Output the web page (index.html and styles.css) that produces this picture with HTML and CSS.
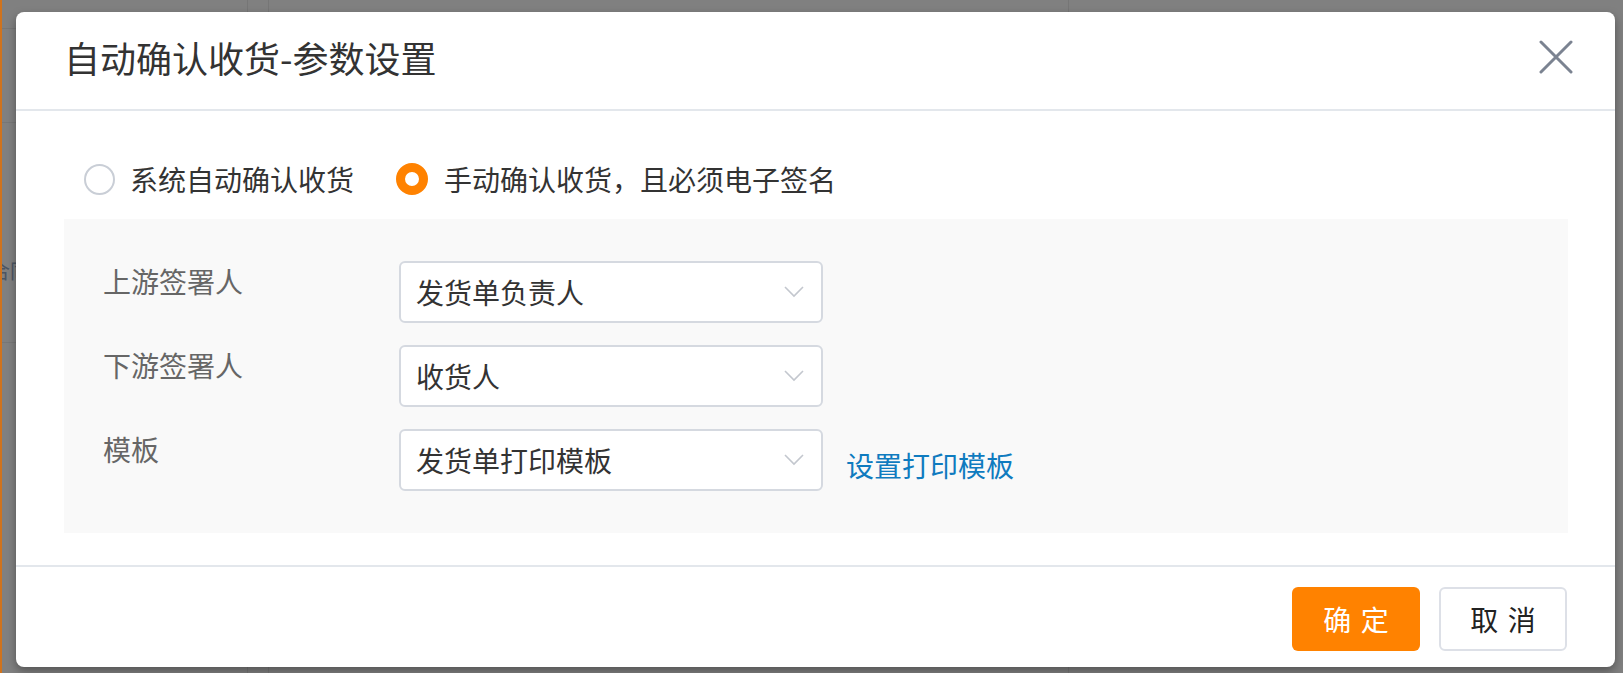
FILE: index.html
```html
<!DOCTYPE html>
<html lang="zh-CN">
<head>
<meta charset="utf-8">
<title>自动确认收货-参数设置</title>
<link rel="stylesheet" href="styles.css">
</head>
<body>
<div class="page">
  <div class="page-strip"></div>
  <div class="page-col col-a">
    <div class="page-row r1"></div>
    <div class="page-row r2"></div>
    <div class="page-row r3"><span class="ghost-text">合同</span></div>
  </div>
  <div class="page-col col-b"></div>
  <div class="page-col col-c"></div>
  <div class="page-col col-b"></div>
  <div class="page-col col-d"></div>
</div>

<div class="modal">
  <div class="modal-header">
    <h1 class="modal-title">自动确认收货-参数设置</h1>
    <button class="modal-close" aria-label="关闭">
      <svg width="34" height="34" viewBox="0 0 34 34"><path d="M2 2 L32 32 M32 2 L2 32" stroke="#7b8391" stroke-width="3" stroke-linecap="round" fill="none"/></svg>
    </button>
  </div>

  <div class="modal-body">
    <div class="radio-row">
      <label class="radio"><span class="radio-dot"></span><span class="radio-text">系统自动确认收货</span></label>
      <label class="radio checked"><span class="radio-dot"></span><span class="radio-text">手动确认收货，且必须电子签名</span></label>
    </div>

    <div class="panel">
      <div class="field">
        <div class="field-label">上游签署人</div>
        <div class="select"><span class="select-value">发货单负责人</span>
          <svg class="chev" width="20" height="12" viewBox="0 0 20 12"><path d="M1 1 L10 10 L19 1" stroke="#c3c7ce" stroke-width="1.6" fill="none"/></svg>
        </div>
      </div>
      <div class="field">
        <div class="field-label">下游签署人</div>
        <div class="select"><span class="select-value">收货人</span>
          <svg class="chev" width="20" height="12" viewBox="0 0 20 12"><path d="M1 1 L10 10 L19 1" stroke="#c3c7ce" stroke-width="1.6" fill="none"/></svg>
        </div>
      </div>
      <div class="field">
        <div class="field-label">模板</div>
        <div class="select"><span class="select-value">发货单打印模板</span>
          <svg class="chev" width="20" height="12" viewBox="0 0 20 12"><path d="M1 1 L10 10 L19 1" stroke="#c3c7ce" stroke-width="1.6" fill="none"/></svg>
        </div>
        <a class="field-link" href="#">设置打印模板</a>
      </div>
    </div>
  </div>

  <div class="modal-footer">
    <button class="btn btn-primary">确定</button>
    <button class="btn btn-default">取消</button>
  </div>
</div>
</body>
</html>
```

FILE: styles.css
```css
* { box-sizing: border-box; }

html, body {
  margin: 0;
  padding: 0;
  width: 1623px;
  height: 673px;
  overflow: hidden;
}

body {
  background: #808080;
  font-family: "Noto Sans CJK SC", "Noto Sans", sans-serif;
  color: #333;
}

/* dimmed page behind the modal */
.page {
  display: flex;
  height: 673px;
}
.page-strip {
  width: 2px;
  background: #d0731d;
}
.page-col {
  height: 100%;
}
.col-a {
  width: 246px;
  border-right: 1px solid #767676;
  overflow: hidden;
}
.col-b {
  width: 21px;
  border-right: 1px solid #767676;
}
.col-c {
  width: 779px;
}
.col-d {
  flex: 1;
}
.page-row {
  border-bottom: 1px solid #777;
}
.r1 { height: 29px; }
.r2 { height: 94px; }
.r3 {
  height: 220px;
  padding-top: 136px;
}
.ghost-text {
  display: block;
  margin-left: -12px;
  font-size: 20px;
  line-height: 24px;
  color: #4c5563;
}

/* modal */
.modal {
  position: absolute;
  left: 16px;
  top: 12px;
  width: 1599px;
  height: 655px;
  background: #fff;
  border-radius: 8px;
  box-shadow: 0 4px 10px rgba(0, 0, 0, 0.35);
  display: flex;
  flex-direction: column;
}

.modal-header {
  height: 99px;
  flex: none;
  border-bottom: 2px solid #e3e7ec;
  display: flex;
  align-items: center;
  justify-content: space-between;
  padding: 0 42px 8px 48px;
}
.modal-title {
  margin: 0;
  font-size: 36px;
  font-weight: 400;
  line-height: 48px;
  color: #333;
}
.modal-close {
  border: 0;
  background: none;
  padding: 0;
  width: 34px;
  height: 34px;
  display: flex;
}

.modal-body {
  flex: 1;
  padding: 40px 47px 0 48px;
}

.radio-row {
  height: 56px;
  display: flex;
  align-items: center;
  padding-left: 20px;
  gap: 42px;
}
.radio {
  display: flex;
  align-items: center;
  font-size: 28px;
  line-height: 40px;
  color: #333;
}
.radio-dot {
  width: 31px;
  height: 31px;
  border-radius: 50%;
  border: 2px solid #c9ced6;
  background: #fff;
  margin-right: 15px;
  flex: none;
}
.radio.checked .radio-dot {
  border: 9px solid #ff8200;
  margin-right: 16px;
  width: 32px;
  height: 32px;
}

.panel {
  margin-top: 12px;
  background: #f9f9f9;
  padding: 42px 0 42px 39px;
  display: flex;
  flex-direction: column;
  gap: 22px;
}
.field {
  display: flex;
  align-items: center;
  height: 62px;
}
.field-label {
  width: 296px;
  align-self: flex-start;
  font-size: 28px;
  line-height: 40px;
  color: #666;
}
.select {
  width: 424px;
  height: 62px;
  background: #fff;
  border: 2px solid #d5d9e0;
  border-radius: 6px;
  display: flex;
  align-items: center;
  justify-content: space-between;
  padding: 0 17px 0 15px;
}
.select-value {
  font-size: 28px;
  line-height: 40px;
  color: #333;
}
.chev {
  display: block;
}
.field-link {
  margin-left: 23px;
  margin-top: 10px;
  font-size: 28px;
  line-height: 40px;
  color: #0f7bbf;
  text-decoration: none;
}

.modal-footer {
  flex: none;
  height: 102px;
  border-top: 2px solid #e3e7ec;
  display: flex;
  justify-content: flex-end;
  align-items: flex-start;
  gap: 19px;
  padding: 20px 48px 0 0;
}
.btn {
  width: 128px;
  height: 64px;
  border-radius: 6px;
  font-family: "Noto Sans CJK SC", sans-serif;
  font-size: 28px;
  letter-spacing: 0.34em;
  text-indent: 0.34em;
  padding: 0;
  cursor: pointer;
}
.btn-primary {
  background: #ff8200;
  border: 0;
  color: #fff;
}
.btn-default {
  background: #fff;
  border: 2px solid #dde0e7;
  color: #222;
}
```
